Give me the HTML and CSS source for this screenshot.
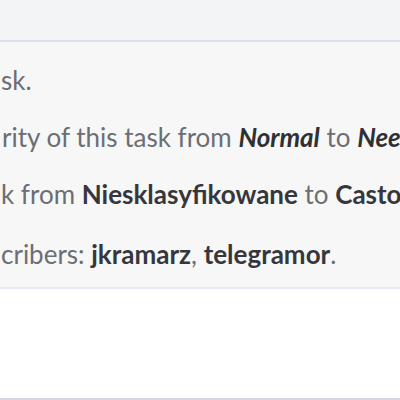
FILE: index.html
```html
<!DOCTYPE html>
<html>
<head>
<meta charset="utf-8">
<link rel="stylesheet" href="styles.css">
</head>
<body>
<div class="top"></div>
<div class="timeline">
  <div class="row r1">sk.</div>
  <div class="row r2">rity of this task from <em>Normal</em> to <em>Needs Triage</em>.</div>
  <div class="row r3">k from <strong>Niesklasyfikowane</strong> to <strong>Castor</strong>.</div>
  <div class="row r4">cribers: <strong>jkramarz</strong>, <strong>telegramor</strong>.</div>
</div>
<div class="footer"></div>
</body>
</html>
```
FILE: styles.css
```css
html, body {
  margin: 0;
  padding: 0;
  background: #ffffff;
}
body {
  width: 400px;
  height: 400px;
  overflow: hidden;
  font-family: Lato, "Noto Sans", sans-serif;
}
.top {
  height: 40px;
  background: #f3f4f6;
  border-bottom: 2px solid #dde0e8;
}
.timeline {
  background: #f7f7f7;
  border-bottom: 2px solid #ebe9f4;
  display: flex;
  flex-direction: column;
  gap: 27px;
  padding-top: 23px;
  box-sizing: border-box;
  height: 247px;
}
.row {
  font-size: 26px;
  line-height: 30px;
  color: #6b6e74;
  white-space: nowrap;
  overflow: hidden;
  padding-left: 1px;
}
.row em {
  font-style: italic;
  font-weight: 700;
  color: #2f3034;
}
.row strong {
  font-weight: 700;
  color: #36373c;
}
.r2 { padding-left: 2px; }
.r4 { margin-top: 3px; }
.footer {
  height: 109px;
  border-bottom: 2px solid #d5d8e2;
}
```
